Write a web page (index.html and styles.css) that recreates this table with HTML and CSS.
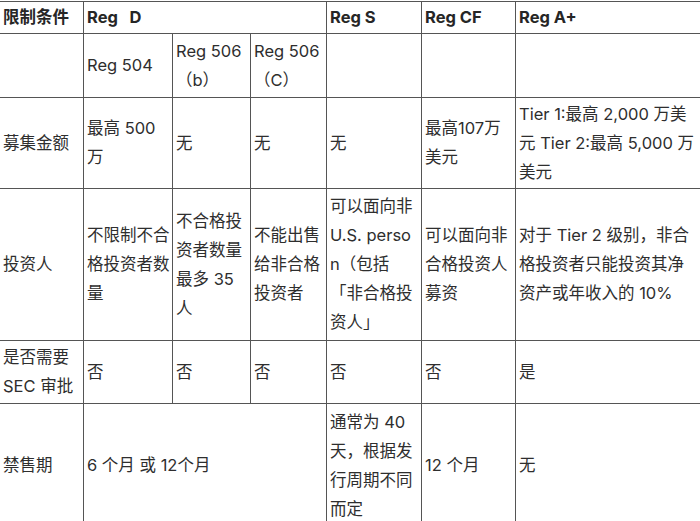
FILE: index.html
```html
<!DOCTYPE html>
<html lang="zh-CN">
<head>
<meta charset="utf-8">
<title>Reg 对比</title>
<link rel="stylesheet" href="styles.css">
</head>
<body>
<table class="cmp">
  <colgroup>
    <col class="c1"><col class="c2"><col class="c3"><col class="c4"><col class="c5"><col class="c6"><col class="c7">
  </colgroup>
  <tr class="r1 head">
    <td>限制条件</td>
    <td colspan="3">Reg&nbsp;&nbsp;&nbsp;D</td>
    <td>Reg S</td>
    <td>Reg CF</td>
    <td class="last">Reg A+</td>
  </tr>
  <tr class="r2">
    <td></td>
    <td>Reg 504</td>
    <td>Reg 506（b）</td>
    <td>Reg 506（C）</td>
    <td></td>
    <td></td>
    <td class="last"></td>
  </tr>
  <tr class="r3">
    <td>募集金额</td>
    <td>最高 500 万</td>
    <td>无</td>
    <td>无</td>
    <td>无</td>
    <td>最高107万美元</td>
    <td class="last">Tier 1:最高 2,000 万美元 Tier 2:最高 5,000 万美元</td>
  </tr>
  <tr class="r4">
    <td>投资人</td>
    <td>不限制不合格投资者数量</td>
    <td>不合格投资者数量最多 35 人</td>
    <td>不能出售给非合格投资者</td>
    <td>可以面向非 U.S. person（包括「非合格投资人」</td>
    <td>可以面向非合格投资人募资</td>
    <td class="last">对于 Tier 2 级别，非合格投资者只能投资其净资产或年收入的 10%</td>
  </tr>
  <tr class="r5">
    <td>是否需要 SEC 审批</td>
    <td>否</td>
    <td>否</td>
    <td>否</td>
    <td>否</td>
    <td>否</td>
    <td class="last">是</td>
  </tr>
  <tr class="r6">
    <td>禁售期</td>
    <td colspan="3">6 个月 或 12个月</td>
    <td>通常为 40 天，根据发行周期不同而定</td>
    <td>12 个月</td>
    <td class="last">无</td>
  </tr>
</table>
</body>
</html>
```

FILE: styles.css
```css
html, body {
  margin: 0;
  padding: 0;
  background: #ffffff;
  overflow: hidden;
}

.cmp {
  border-collapse: collapse;
  table-layout: fixed;
  width: 702px;
  margin: 1px 0 0 -1px;
  font-family: "Inter", "Noto Sans CJK SC", sans-serif;
  font-size: 16.5px;
  line-height: 29px;
  color: #2e2e2e;
}

.c1 { width: 84px; }
.c2 { width: 89px; }
.c3 { width: 78px; }
.c4 { width: 76px; }
.c5 { width: 95px; }
.c6 { width: 94px; }
.c7 { width: 186px; }

.cmp td {
  border: 1px solid #555555;
  padding: 0 2px 0 3px;
  vertical-align: middle;
  text-align: left;
  word-break: break-all;
  overflow-wrap: anywhere;
}

.cmp td.last {
  padding-right: 6px;
}

.head td {
  font-weight: 700;
  color: #262626;
}

.r1 { height: 32px; }
.r2 { height: 64px; }
.r3 { height: 91px; }
.r4 { height: 152px; }
.r5 { height: 63px; }
.r6 { height: 124px; }
```
